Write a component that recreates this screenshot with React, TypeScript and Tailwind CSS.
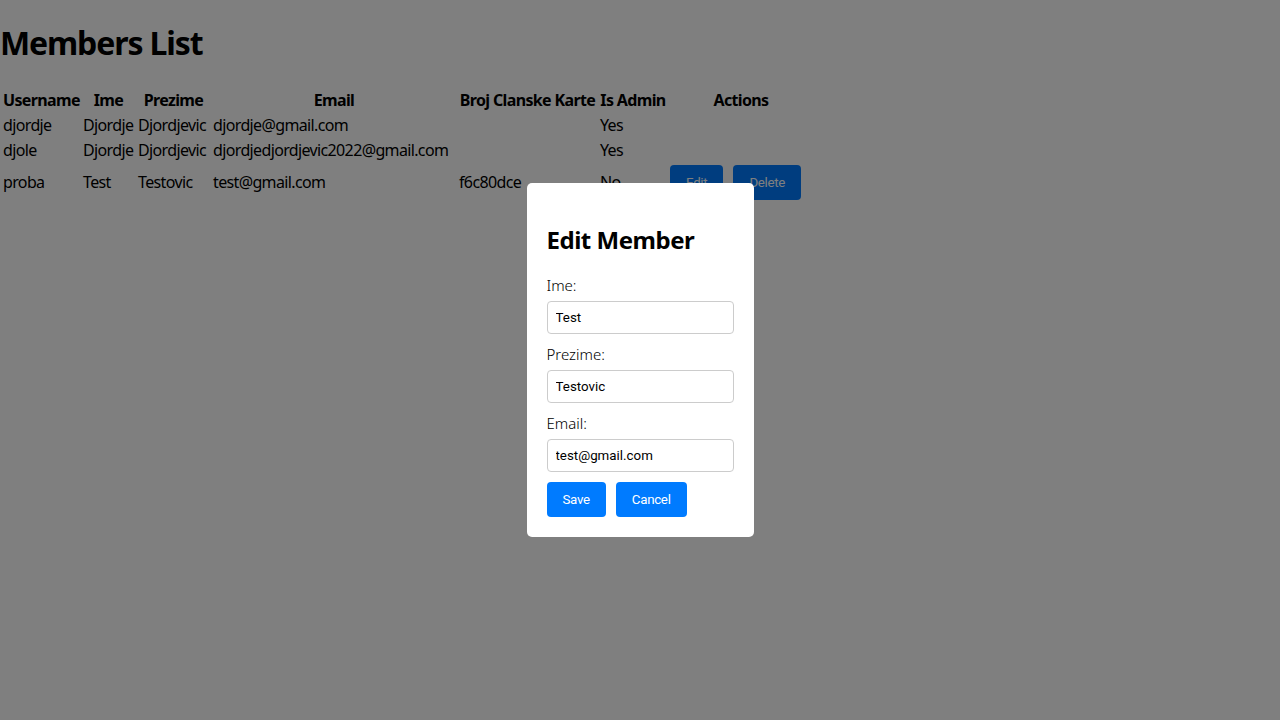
import React from "react";

const rows = [
  { u: "djordje", ime: "Djordje", prez: "Djordjevic", email: "djordje@gmail.com", karta: "", admin: "Yes", actions: false },
  { u: "djole", ime: "Djordje", prez: "Djordjevic", email: "djordjedjordjevic2022@gmail.com", karta: "", admin: "Yes", actions: false },
  { u: "proba", ime: "Test", prez: "Testovic", email: "test@gmail.com", karta: "f6c80dce", admin: "No", actions: true },
];

const btn = "bg-[#007bff] text-white rounded-[4px] px-4 h-[35px] text-[13.33px] leading-[15px] font-[450] tracking-[-0.3px] font-['Roboto','Liberation_Sans',Arial,sans-serif]";

export default function App() {
  return (
    <div className="relative min-h-[720px] bg-white text-black font-['Noto_Sans','Open_Sans',sans-serif]">
      <h1 className="text-[32px] font-bold leading-[44px] my-[21.44px] tracking-[-0.035em]">Members List</h1>
      <table className="table-fixed border-separate border-spacing-[2px] w-[815px] text-[16px] leading-[21px] tracking-[-0.04em]">
        <thead>
          <tr>
            <th className="w-[78px] p-[1px] text-center font-bold whitespace-nowrap">Username</th>
            <th className="w-[53px] p-[1px] text-center font-bold">Ime</th>
            <th className="w-[73px] p-[1px] text-center font-bold">Prezime</th>
            <th className="w-[244px] p-[1px] text-center font-bold">Email</th>
            <th className="w-[139px] p-[1px] text-center font-bold whitespace-nowrap">Broj Clanske Karte</th>
            <th className="w-[68px] p-[1px] text-center font-bold whitespace-nowrap">Is Admin</th>
            <th className="w-[144px] p-[1px] text-center font-bold">Actions</th>
          </tr>
        </thead>
        <tbody>
          {rows.map((r) => (
            <tr key={r.u}>
              <td className="p-[1px] whitespace-nowrap">{r.u}</td>
              <td className="p-[1px] whitespace-nowrap">{r.ime}</td>
              <td className="p-[1px] whitespace-nowrap">{r.prez}</td>
              <td className="p-[1px] whitespace-nowrap">{r.email}</td>
              <td className="p-[1px] whitespace-nowrap">{r.karta}</td>
              <td className="p-[1px] whitespace-nowrap">{r.admin}</td>
              <td className="p-[1px] whitespace-nowrap">
                {r.actions && (
                  <div className="flex">
                    <button className={btn + " mr-[10px]"}>Edit</button>
                    <button className={btn + " mr-[10px]"}>Delete</button>
                  </div>
                )}
              </td>
            </tr>
          ))}
        </tbody>
      </table>

      <div className="fixed inset-0 bg-black/50 flex items-center justify-center">
        <div className="bg-white rounded-[5px] w-[227px] p-5">
          <h2 className="text-[24px] font-bold leading-[32px] mt-[21px] mb-[19px] tracking-[-0.02em]">Edit Member</h2>
          {[
            ["Ime:", "Test"],
            ["Prezime:", "Testovic"],
            ["Email:", "test@gmail.com"],
          ].map(([l, v]) => (
            <div key={l}>
              <label className="block text-[15px] leading-[21px] mb-[5px] font-light">{l}</label>
              <input
                readOnly
                value={v}
                className="block w-[187px] h-[33px] mb-[10px] border border-[#ccc] rounded-[4px] px-2 text-[13.33px] text-black font-['Roboto','Liberation_Sans',Arial,sans-serif]"
              />
            </div>
          ))}
          <div className="flex gap-[10px]">
            <button className={btn}>Save</button>
            <button className={btn}>Cancel</button>
          </div>
        </div>
      </div>
    </div>
  );
}
